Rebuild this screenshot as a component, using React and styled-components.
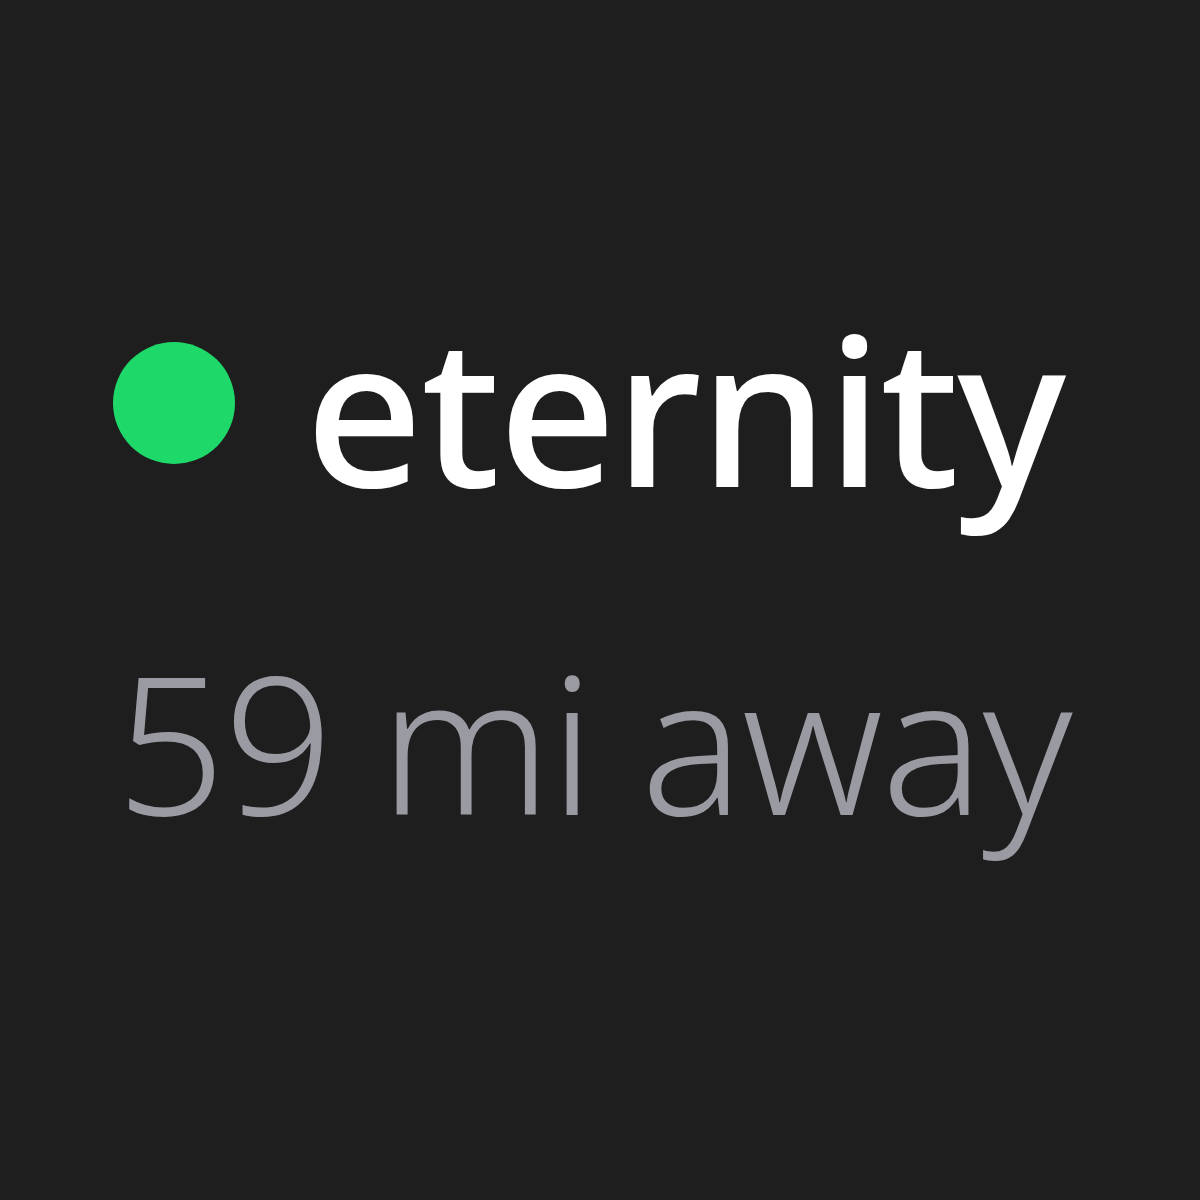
import React from 'react';
import styled, { createGlobalStyle } from 'styled-components';

const GlobalStyle = createGlobalStyle`
  html, body {
    margin: 0;
    padding: 0;
    background: #1e1e1e;
  }
`;

const Page = styled.div`
  width: 1200px;
  height: 1200px;
  background: #1e1e1e;
  box-sizing: border-box;
  padding: 290px 0 0 113px;
  display: flex;
  flex-direction: column;
  font-family: 'Noto Sans', 'Open Sans', sans-serif;
`;

const NameRow = styled.div`
  display: flex;
  flex-direction: row;
  align-items: center;
  gap: 70px;
  height: 226px;
`;

const StatusDot = styled.span`
  width: 122px;
  height: 122px;
  border-radius: 50%;
  background: ${(p) => p.color};
  flex-shrink: 0;
`;

const Name = styled.span`
  color: #ffffff;
  font-size: 206px;
  font-weight: 500;
  line-height: 226px;
  letter-spacing: -2px;
  padding-top: 8px;
`;

const Distance = styled.div`
  color: #9a9aa2;
  font-size: 192px;
  font-weight: 300;
  line-height: 210px;
  margin: 120px 0 0 3px;
  letter-spacing: -1.8px;
`;

const App = () => (
  <>
    <GlobalStyle />
    <Page>
      <NameRow>
        <StatusDot color="#1ed86a" />
        <Name>eternity</Name>
      </NameRow>
      <Distance>59 mi away</Distance>
    </Page>
  </>
);

export default App;
